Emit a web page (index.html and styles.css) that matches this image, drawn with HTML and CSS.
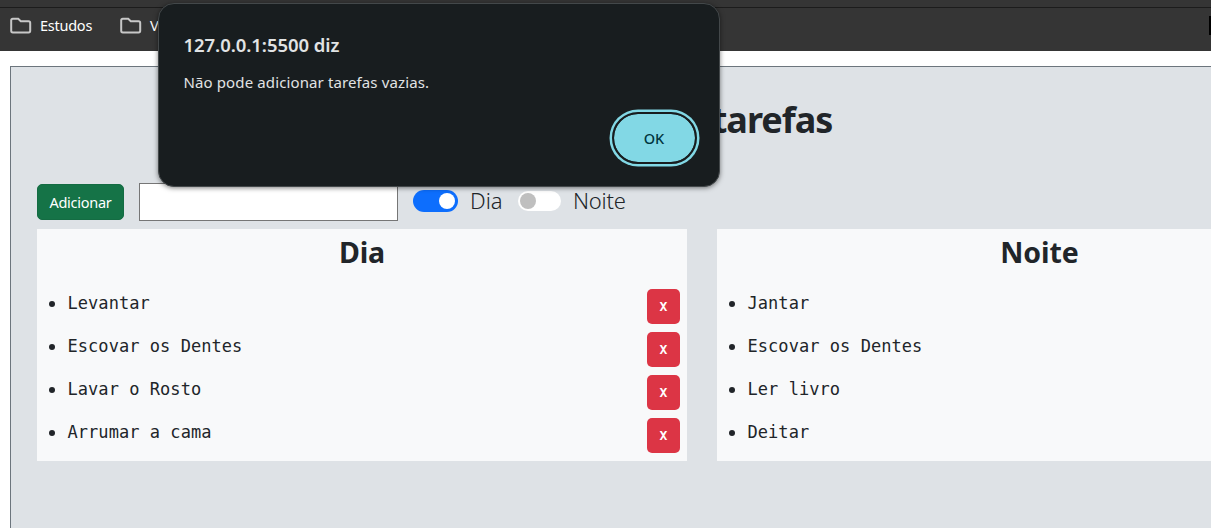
FILE: index.html
```html
<!DOCTYPE html>
<html lang="pt-BR">
<head>
<meta charset="utf-8">
<title>Lista de tarefas</title>
<link rel="stylesheet" href="styles.css">
</head>
<body>
<header class="browser-bar">
  <div class="bookmark">
    <svg class="folder" width="22" height="17" viewBox="0 0 22 17"><path d="M2.8 1.8h5.4l2.6 2.4h7.8q1.6 0 1.6 1.6v8q0 1.6-1.6 1.6H2.8q-1.6 0-1.6-1.6V3.4Q1.2 1.8 2.8 1.8z"/></svg>
    <span class="bookmark-name">Estudos</span>
  </div>
  <div class="bookmark">
    <svg class="folder" width="22" height="17" viewBox="0 0 22 17"><path d="M2.8 1.8h5.4l2.6 2.4h7.8q1.6 0 1.6 1.6v8q0 1.6-1.6 1.6H2.8q-1.6 0-1.6-1.6V3.4Q1.2 1.8 2.8 1.8z"/></svg>
    <span class="bookmark-name">V</span>
  </div>
  <span class="bar-edge"></span>
</header>
<main class="app">
  <h1 class="title"><span class="title-text">Lista de tarefas</span></h1>
  <div class="controls">
    <button class="add">Adicionar</button>
    <input class="field" type="text" aria-label="Tarefa">
    <span class="switch on"></span><span class="switch-label day">Dia</span>
    <span class="switch off"></span><span class="switch-label">Noite</span>
  </div>
  <div class="columns">
    <section class="card">
      <h2 class="card-title">Dia</h2>
      <ul class="tasks">
        <li class="task"><span class="task-name">Levantar</span><button class="remove">X</button></li>
        <li class="task"><span class="task-name">Escovar os Dentes</span><button class="remove">X</button></li>
        <li class="task"><span class="task-name">Lavar o Rosto</span><button class="remove">X</button></li>
        <li class="task"><span class="task-name">Arrumar a cama</span><button class="remove">X</button></li>
      </ul>
    </section>
    <section class="card">
      <h2 class="card-title night">Noite</h2>
      <ul class="tasks">
        <li class="task"><span class="task-name">Jantar</span></li>
        <li class="task"><span class="task-name">Escovar os Dentes</span></li>
        <li class="task"><span class="task-name">Ler livro</span></li>
        <li class="task"><span class="task-name">Deitar</span></li>
      </ul>
    </section>
  </div>
</main>
<div class="dialog" role="alertdialog">
  <div class="dialog-title">127.0.0.1:5500 diz</div>
  <div class="dialog-text">Não pode adicionar tarefas vazias.</div>
  <button class="ok">OK</button>
</div>
</body>
</html>
```

FILE: styles.css
```css
* { box-sizing: border-box; }
html { overflow: hidden; }
body {
  margin: 0;
  height: 528px;
  overflow: hidden;
  position: relative;
  background: #fff;
  color: #212529;
  font-family: "Noto Sans", "Open Sans", sans-serif;
}
.browser-bar {
  display: flex;
  align-items: flex-start;
  gap: 28px;
  height: 51px;
  padding: 17px 0 0 10px;
  background: linear-gradient(#353535 7px, #1c1c1c 7px, #1c1c1c 8px, #353535 8px);
}
.bookmark { display: flex; gap: 8px; height: 18px; }
.folder { fill: none; stroke: #c7c7c7; stroke-width: 2; }
.bookmark-name {
  color: #fff;
  font-size: 14.5px;
  line-height: 17px;
  letter-spacing: -0.25px;
}
.bar-edge { width: 2px; height: 19px; margin: -1px 0 0 auto; background: #000; }
.app {
  width: 1384px;
  height: 462px;
  margin: 15px 0 0 10px;
  padding: 0 26px;
  background: #dee2e6;
  border: 1px solid #6c757d;
  border-bottom: 0;
}
.title {
  margin: 0;
  height: 116px;
  padding-top: 29px;
  text-align: center;
  font-size: 36px;
  line-height: 48px;
  font-weight: 700;
}
.title-text { letter-spacing: -1px; }
.controls { display: flex; align-items: center; height: 38px; }
.add {
  width: 87px;
  height: 36px;
  padding: 0;
  border: 1px solid #146c43;
  border-radius: 5px;
  background: #157347;
  color: #fff;
  font: 14.5px/34px "Noto Sans", sans-serif;
  letter-spacing: -0.25px;
}
.field {
  width: 259px;
  height: 38px;
  margin: 0 15px;
  border: 1px solid #767676;
  background: #fff;
}
.switch {
  display: flex;
  align-items: center;
  width: 45px;
  height: 22px;
  margin-top: -2px;
  border-radius: 11px;
}
.switch::after { content: ""; width: 16px; height: 16px; border-radius: 50%; }
.switch.on { justify-content: flex-end; padding-right: 3px; background: #0d6efd; }
.switch.on::after { background: #fff; }
.switch.off { width: 43px; height: 20px; padding-left: 2px; background: #fff; }
.switch.off::after { background: #bfbfbf; }
.switch-label {
  margin: -4px 0 0 12px;
  font-size: 22px;
  line-height: 30px;
  font-weight: 350;
  letter-spacing: -0.2px;
}
.switch-label.day { width: 48px; letter-spacing: 0; }
.columns { display: grid; grid-template-columns: 650px 650px; gap: 30px; margin-top: 8px; }
.card { height: 232px; background: #f8f9fa; }
.card-title {
  margin: 0;
  padding-top: 5px;
  height: 60px;
  text-align: center;
  font-size: 28.5px;
  line-height: 36px;
  font-weight: 700;
  letter-spacing: -0.1px;
}
.card-title.night { padding-right: 5px; }
.tasks { margin: 0; padding: 0 7px 0 12px; list-style: none; }
.task {
  display: flex;
  align-items: flex-start;
  height: 43px;
  font: 17px/28px "DejaVu Sans Mono", monospace;
  letter-spacing: 0.05px;
}
.task::before {
  content: "";
  flex: none;
  width: 6px;
  height: 6px;
  margin: 12px 12.5px 0 0;
  border-radius: 50%;
  background: #212529;
}
.task-name { flex: 1; }
.remove {
  width: 33px;
  height: 35px;
  padding: 0;
  border: 0;
  border-radius: 5px;
  background: #dc3545;
  color: #fff;
  font: bold 13px/35px "DejaVu Sans Mono", monospace;
}
.dialog {
  position: absolute;
  left: 158px;
  top: 3px;
  width: 562px;
  height: 184px;
  padding: 28px 22.5px 0 24.5px;
  display: flex;
  flex-direction: column;
  align-items: flex-start;
  border: 1px solid #43484a;
  border-radius: 16px;
  background: #181d1f;
  color: #e1e3e4;
  box-shadow: 0 1px 5px rgba(0, 0, 0, .5);
}
.dialog-title { font-size: 18.5px; line-height: 26px; font-weight: 600; letter-spacing: -0.05px; }
.dialog-text { margin-top: 12px; font-size: 15px; line-height: 24px; letter-spacing: 0.12px; }
.ok {
  align-self: flex-end;
  width: 85px;
  height: 52px;
  margin-top: 18px;
  padding: 0;
  border: 2.5px solid #181d1f;
  border-radius: 26px;
  outline: none;
  box-shadow: 0 0 0 2.5px #82d8e5;
  background: #82d8e5;
  background-clip: padding-box;
  color: #00363e;
  font: 500 14.5px/47px "Noto Sans", sans-serif;
}
```
